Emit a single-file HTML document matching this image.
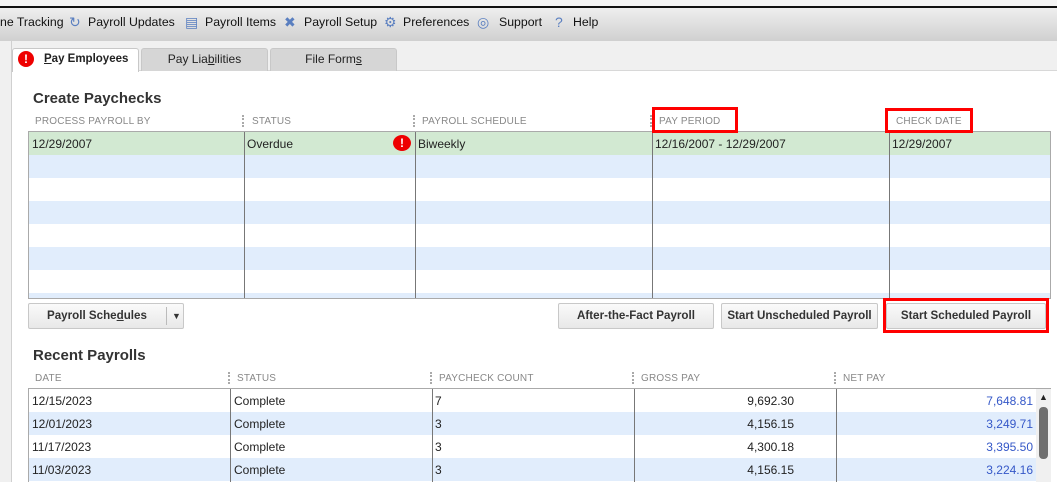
<!DOCTYPE html><html><head><style>
*{box-sizing:border-box;margin:0;padding:0}
body{width:1057px;height:482px;overflow:hidden;background:#fff;font-family:"Liberation Sans",sans-serif;font-size:12px;color:#222;position:relative}
.a{position:absolute}
.tb span{position:absolute;top:7px;font-size:12.3px;color:#111}
.tb i{position:absolute;top:6px;font-style:normal;font-size:14px;color:#5a7fc0}
.hd{position:absolute;font-size:10px;color:#888;letter-spacing:.2px}
.dot{position:absolute;width:1px;height:12px;border-left:2px dotted #aaa}
.row{position:absolute;height:23px}
.cell{position:absolute;font-size:12px;top:5px}
.vl{position:absolute;width:1px;background:#777}
.btn{position:absolute;height:26px;border:1px solid #c8c8c8;border-radius:2px;background:linear-gradient(#fafafa,#e8e8e8);font-weight:bold;font-size:11.6px;color:#333;text-align:center;line-height:24px}
.red{position:absolute;border:3px solid #f00}
.tab{position:absolute;top:48px;height:23px;background:#d6d6d6;border:1px solid #c8c8c8;border-bottom:none;border-radius:3px 3px 0 0;text-align:center;font-size:12px;line-height:21px;color:#222}
</style></head><body>
<div class="a" style="left:0;top:0;width:1057px;height:6px;background:#f4f4f4"></div>
<div class="a" style="left:0;top:6px;width:1057px;height:2px;background:#111"></div>
<div class="a tb" style="left:0;top:8px;width:1057px;height:33px;background:linear-gradient(#eeeeee,#d0d0d0)">
<span style="left:0">ne Tracking</span>
<i style="left:69px">&#x21BB;</i><span style="left:88px">Payroll Updates</span>
<i style="left:185px">&#x25A4;</i><span style="left:205px">Payroll Items</span>
<i style="left:284px">&#x2716;</i><span style="left:304px">Payroll Setup</span>
<i style="left:384px">&#x2699;</i><span style="left:403px">Preferences</span>
<i style="left:477px">&#x25CE;</i><span style="left:499px">Support</span>
<i style="left:555px">?</i><span style="left:573px">Help</span>
</div>
<div class="a" style="left:0;top:41px;width:1057px;height:30px;background:#f0f0f0;border-bottom:1px solid #d8d8d8"></div>
<div class="a" style="left:0;top:41px;width:12px;height:441px;background:#f0f0f0;border-right:1px solid #d0d0d0"></div>
<div class="tab" style="left:12px;width:127px;background:#fff;height:24px;text-align:left;padding-left:31px;font-weight:bold;font-size:11.5px"><u>P</u>ay Employees</div>
<div class="a" style="left:18px;top:51px;width:16px;height:16px;border-radius:50%;background:#e00;color:#fff;font-weight:bold;text-align:center;line-height:16px;font-size:12px">!</div>
<div class="tab" style="left:141px;width:127px">Pay Lia<u>b</u>ilities</div>
<div class="tab" style="left:270px;width:127px">File Form<u>s</u></div>
<div class="a" style="left:33px;top:90px;font-size:15px;font-weight:bold;color:#333">Create Paychecks</div>
<div class="hd" style="left:35px;top:116px">PROCESS PAYROLL BY</div><div class="dot" style="left:242px;top:115px"></div>
<div class="hd" style="left:252px;top:116px">STATUS</div><div class="dot" style="left:413px;top:115px"></div>
<div class="hd" style="left:422px;top:116px">PAYROLL SCHEDULE</div><div class="dot" style="left:650px;top:115px"></div>
<div class="hd" style="left:659px;top:116px">PAY PERIOD</div>
<div class="hd" style="left:896px;top:116px">CHECK DATE</div>
<div class="a" style="left:28px;top:131px;width:1023px;height:168px;border:1px solid #aaa;border-bottom:none;overflow:hidden">
<div class="row" style="top:0;width:100%;background:#d2e9d2"></div>
<div class="row" style="top:23px;width:100%;background:#e1edfc"></div>
<div class="row" style="top:69px;width:100%;background:#e1edfc"></div>
<div class="row" style="top:115px;width:100%;background:#e1edfc"></div>
<div class="row" style="top:161px;width:100%;background:#e1edfc"></div>
<div class="cell" style="left:3px">12/29/2007</div>
<div class="cell" style="left:218px">Overdue</div>
<div class="a" style="left:364px;top:3px;width:18px;height:16px;border-radius:50%;background:#e00;color:#fff;font-weight:bold;text-align:center;line-height:16px">!</div>
<div class="cell" style="left:389px">Biweekly</div>
<div class="cell" style="left:626px">12/16/2007 - 12/29/2007</div>
<div class="cell" style="left:863px">12/29/2007</div>
<div class="vl" style="left:215px;top:0;height:168px"></div>
<div class="vl" style="left:386px;top:0;height:168px"></div>
<div class="vl" style="left:623px;top:0;height:168px"></div>
<div class="vl" style="left:860px;top:0;height:168px"></div>
</div>
<div class="a" style="left:28px;top:298px;width:1023px;height:1px;background:#aaa"></div>
<div class="red" style="left:652px;top:107px;width:86px;height:26px"></div>
<div class="red" style="left:885px;top:108px;width:88px;height:25px"></div>
<div class="btn" style="left:28px;top:303px;width:156px;text-align:left;padding-left:18px">Payroll Sche<u>d</u>ules<span style="position:absolute;left:137px;top:3px;height:18px;border-left:1px solid #bbb;padding-left:5px;line-height:18px;font-size:9px">&#x25BC;</span></div>
<div class="btn" style="left:558px;top:303px;width:156px">After-the-Fact Payroll</div>
<div class="btn" style="left:721px;top:303px;width:157px">Start Unscheduled Payroll</div>
<div class="btn" style="left:886px;top:303px;width:160px">Start Scheduled Payroll</div>
<div class="red" style="left:883px;top:298px;width:166px;height:35px"></div>
<div class="a" style="left:33px;top:347px;font-size:15px;font-weight:bold;color:#333">Recent Payrolls</div>
<div class="hd" style="left:35px;top:373px">DATE</div><div class="dot" style="left:228px;top:372px"></div>
<div class="hd" style="left:237px;top:373px">STATUS</div><div class="dot" style="left:430px;top:372px"></div>
<div class="hd" style="left:439px;top:373px">PAYCHECK COUNT</div><div class="dot" style="left:632px;top:372px"></div>
<div class="hd" style="left:641px;top:373px">GROSS PAY</div><div class="dot" style="left:834px;top:372px"></div>
<div class="hd" style="left:843px;top:373px">NET PAY</div>
<div class="a" style="left:28px;top:388px;width:1023px;height:94px;border-top:1px solid #aaa;border-left:1px solid #aaa;overflow:hidden">
<div class="row" style="top:23px;width:1007px;background:#e1edfc"></div>
<div class="row" style="top:69px;width:1007px;background:#e1edfc"></div>
<div class="cell" style="left:3px">12/15/2023</div><div class="cell" style="left:205px">Complete</div><div class="cell" style="left:406px">7</div><div class="cell" style="left:0;width:765px;text-align:right">9,692.30</div><div class="cell" style="left:0;width:1004px;text-align:right;color:#3558c8">7,648.81</div>
<div class="cell" style="left:3px;top:28px">12/01/2023</div><div class="cell" style="left:205px;top:28px">Complete</div><div class="cell" style="left:406px;top:28px">3</div><div class="cell" style="left:0;top:28px;width:765px;text-align:right">4,156.15</div><div class="cell" style="left:0;top:28px;width:1004px;text-align:right;color:#3558c8">3,249.71</div>
<div class="cell" style="left:3px;top:51px">11/17/2023</div><div class="cell" style="left:205px;top:51px">Complete</div><div class="cell" style="left:406px;top:51px">3</div><div class="cell" style="left:0;top:51px;width:765px;text-align:right">4,300.18</div><div class="cell" style="left:0;top:51px;width:1004px;text-align:right;color:#3558c8">3,395.50</div>
<div class="cell" style="left:3px;top:74px">11/03/2023</div><div class="cell" style="left:205px;top:74px">Complete</div><div class="cell" style="left:406px;top:74px">3</div><div class="cell" style="left:0;top:74px;width:765px;text-align:right">4,156.15</div><div class="cell" style="left:0;top:74px;width:1004px;text-align:right;color:#3558c8">3,224.16</div>
<div class="vl" style="left:201px;top:0;height:94px"></div>
<div class="vl" style="left:403px;top:0;height:94px"></div>
<div class="vl" style="left:605px;top:0;height:94px"></div>
<div class="vl" style="left:807px;top:0;height:94px"></div>
<div class="a" style="left:1007px;top:0;width:16px;height:94px;background:#f0f0f0"></div>
<div class="a" style="left:1010px;top:3px;font-size:9px;color:#222">&#x25B2;</div>
<div class="a" style="left:1010px;top:18px;width:9px;height:52px;border-radius:4px;background:#6f6f6f"></div>
</div>
</body></html>
